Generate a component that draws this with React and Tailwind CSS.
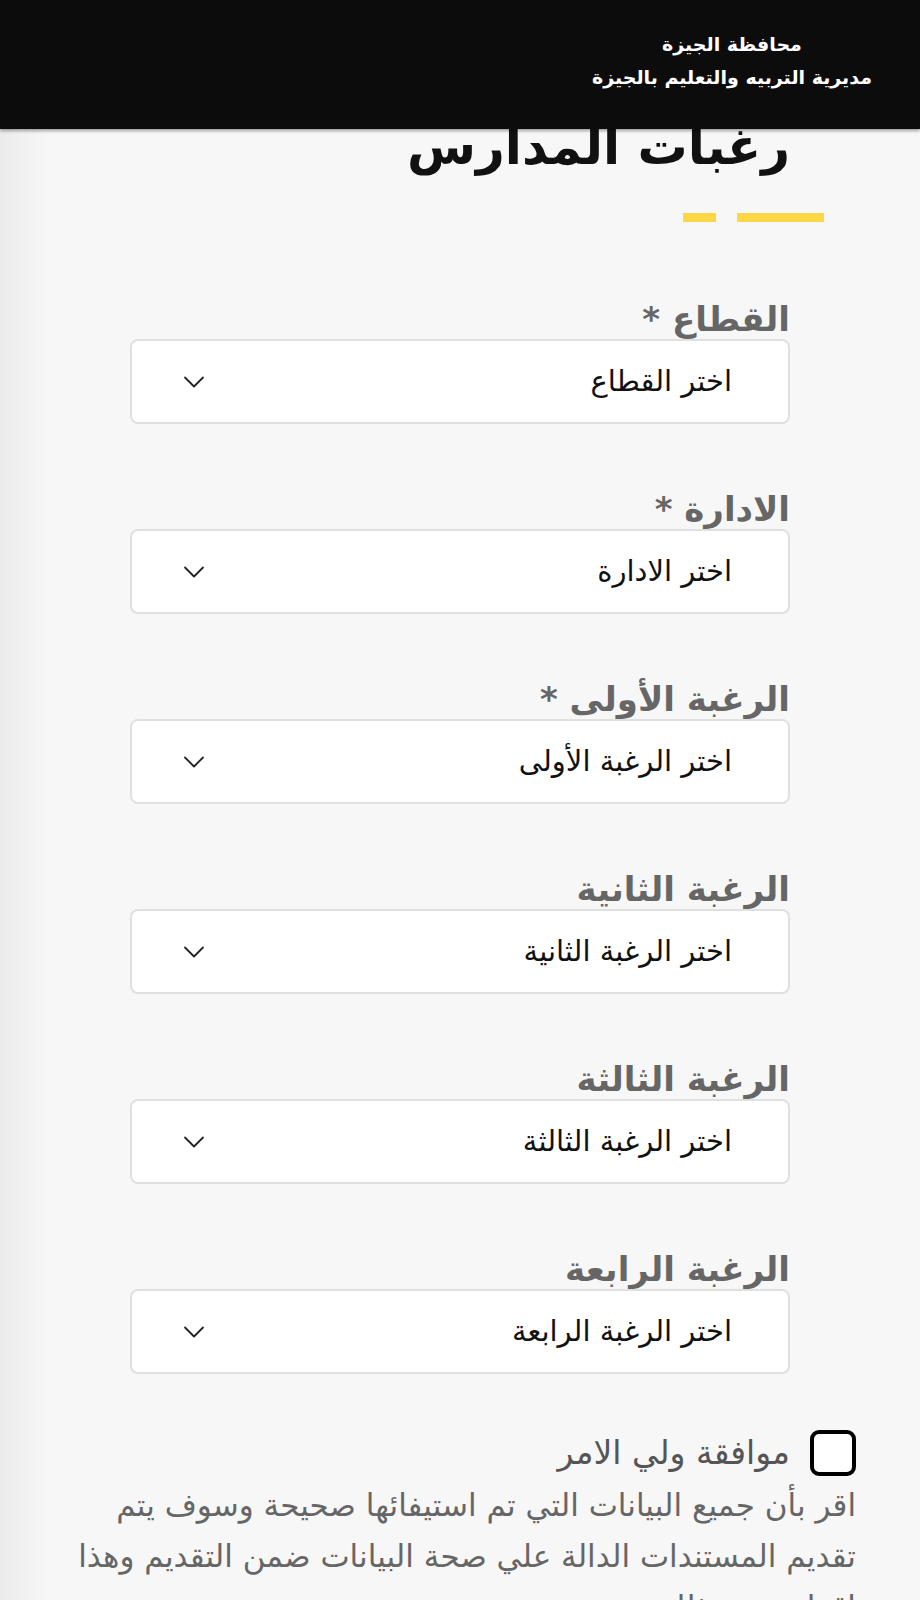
import { ChevronDown } from 'lucide-react';

const fields = [
  { label: 'القطاع', placeholder: 'اختر القطاع', required: true },
  { label: 'الادارة', placeholder: 'اختر الادارة', required: true },
  { label: 'الرغبة الأولى', placeholder: 'اختر الرغبة الأولى', required: true },
  { label: 'الرغبة الثانية', placeholder: 'اختر الرغبة الثانية' },
  { label: 'الرغبة الثالثة', placeholder: 'اختر الرغبة الثالثة' },
  { label: 'الرغبة الرابعة', placeholder: 'اختر الرغبة الرابعة' },
];

function SelectField({ label, placeholder, required }) {
  return (
    <div className="flex flex-col">
      <label className="text-[34px] leading-[40px] font-bold text-[#666666]">
        {label}{required && ' *'}
      </label>
      <div className="h-[85px] rounded-[8px] border-2 border-[#e0e0e0] bg-white flex items-center justify-between pr-[56px] pl-[44px]">
        <span className="text-[29px] text-[#111111]">{placeholder}</span>
        <ChevronDown size={36} strokeWidth={1.2} className="text-[#222222]" />
      </div>
    </div>
  );
}

export default function App() {
  return (
    <div dir="rtl" className="min-h-[1600px] overflow-hidden bg-[linear-gradient(to_left,#f7f7f7_870px,#ebebeb)]" style={{ fontFamily: '"DejaVu Sans", sans-serif' }}>
      <header className="relative z-10 h-[129px] bg-[#0c0c0c] shadow-[0_2px_3px_rgba(0,0,0,0.35)] flex items-center pr-[48px] pb-[8px]">
        <div className="text-center text-white font-bold leading-[33px]">
          <div className="text-[19px]">محافظة الجيزة</div>
          <div className="text-[19px]">مديرية التربيه والتعليم بالجيزة</div>
        </div>
      </header>

      <main className="w-[660px] mx-auto">
        <h1 className="-mt-[22px] text-[50px] leading-[80px] font-bold text-[#111111]">رغبات المدارس</h1>
        <div className="mt-[26px] -mr-[34px] flex gap-[21px]">
          <span className="h-[9px] w-[87px] bg-[#fdd645]" />
          <span className="h-[9px] w-[33px] bg-[#fdd645]" />
        </div>

        <div className="mt-[77px] flex flex-col gap-[65px]">
          {fields.map(f => <SelectField key={f.label} {...f} />)}
        </div>
      </main>

      <section className="w-[792px] mx-auto mt-[54px]">
        <div className="flex items-center gap-[20px]">
          <span className="w-[46px] h-[46px] rounded-[9px] border-[4px] border-black bg-white" />
          <span className="text-[33px] text-[#555555]">موافقة ولي الامر</span>
        </div>
        <p className="mt-[2px] text-[31px] leading-[51px] text-[#666666] whitespace-nowrap">
          اقر بأن جميع البيانات التي تم استيفائها صحيحة وسوف يتم<br />
          تقديم المستندات الدالة علي صحة البيانات ضمن التقديم وهذا<br />
          اقرار مني بذلك
        </p>
      </section>
    </div>
  );
}
